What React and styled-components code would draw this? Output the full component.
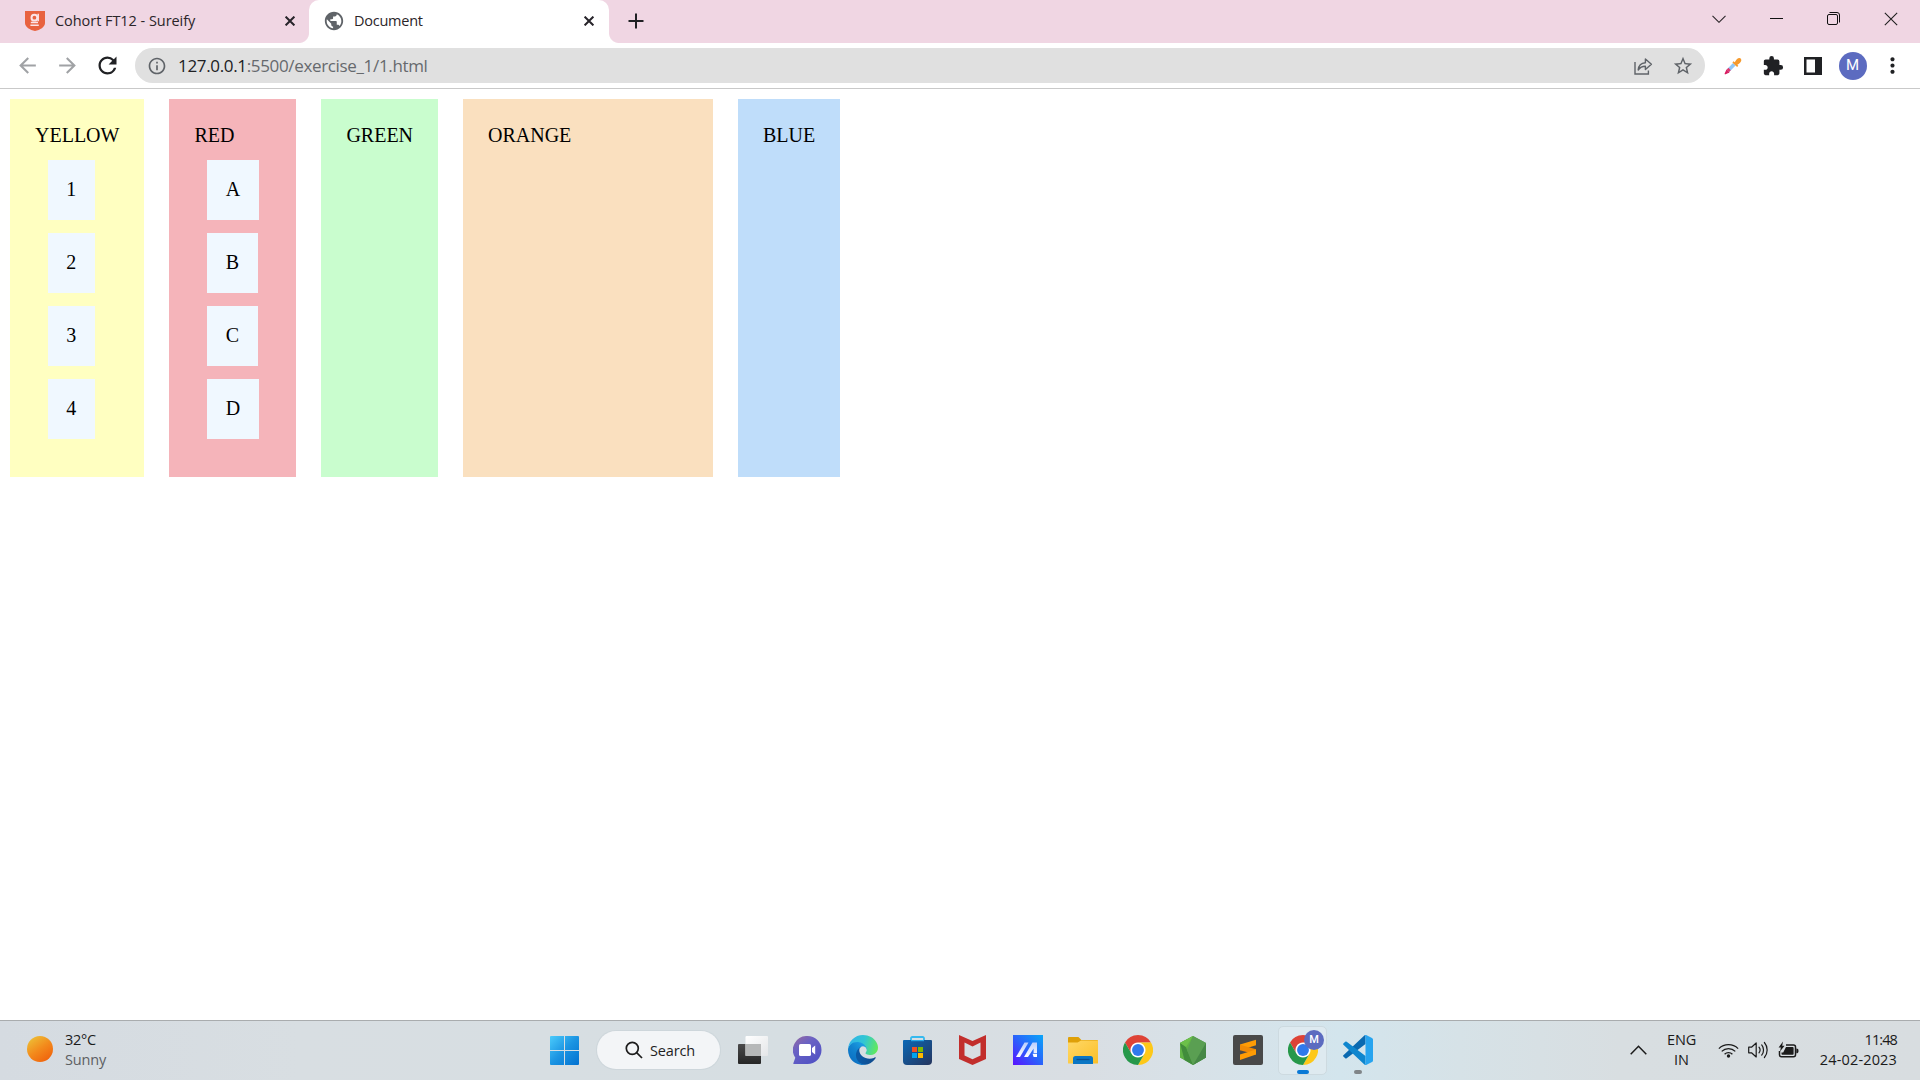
import React from "react";
import styled, { createGlobalStyle } from "styled-components";
import {
  MdPublic,
  MdRefresh,
  MdInfoOutline,
  MdArrowBack,
  MdArrowForward,
  MdStarBorder,
  MdExtension,
  MdMoreVert,
} from "react-icons/md";

const GlobalStyle = createGlobalStyle`
  *, *::before, *::after { box-sizing: border-box; }
  body { margin: 0; background: #fff; overflow: hidden; }
  svg { display: block; flex: none; }
`;

const UI_FONT = `"Open Sans", "Noto Sans", sans-serif`;

const Screen = styled.div`
  display: flex;
  flex-direction: column;
  width: 1920px;
  height: 1080px;
  font-family: ${UI_FONT};
  color: #1f1f1f;
`;

/* Tab strip */
const TabStrip = styled.header`
  display: flex;
  height: 43px;
  background: #f0d6e3;
`;

const Tab = styled.div`
  position: relative;
  display: flex;
  align-items: center;
  width: ${(p) => p.$width}px;
  height: 43px;
  padding: 0 ${(p) => p.$right}px 1px ${(p) => p.$left}px;
  background: ${(p) => (p.$active ? "#fff" : "transparent")};
  border-radius: 10px 10px 0 0;

  &::before,
  &::after {
    content: ${(p) => (p.$active ? '""' : "none")};
    position: absolute;
    bottom: 0;
    width: 10px;
    height: 10px;
  }
  &::before {
    left: -10px;
    background: radial-gradient(circle at 0 0, transparent 9.5px, #fff 10.5px);
  }
  &::after {
    right: -10px;
    background: radial-gradient(circle at 100% 0, transparent 9.5px, #fff 10.5px);
  }
`;

const TabTitle = styled.span`
  flex: 1;
  margin-left: ${(p) => p.$gap}px;
  padding-bottom: 1px;
  font-size: 14.5px;
  line-height: 20px;
  letter-spacing: ${(p) => p.$track}px;
  color: #2b2529;
  white-space: nowrap;
`;

const NewTab = styled.div`
  display: flex;
  align-items: center;
  padding: 0 0 1px 19px;
`;

const WindowControls = styled.div`
  display: flex;
  margin-left: auto;
`;

const WindowButton = styled.div`
  display: flex;
  justify-content: center;
  align-items: center;
  width: 57.3px;
  height: 37px;
`;

/* Toolbar */
const Toolbar = styled.nav`
  display: flex;
  align-items: center;
  height: 46px;
  padding: 0 7.5px 0 7px;
  border-bottom: 1px solid #c9c9c9;
  background: #fff;
`;

const ToolButton = styled.div`
  display: flex;
  justify-content: center;
  align-items: center;
  width: 40px;
  height: 36px;
  color: ${(p) => p.$color || "#202124"};
`;

const AddressBar = styled.div`
  flex: 1;
  display: flex;
  align-items: center;
  height: 35px;
  margin: 0 7.5px 0 8px;
  padding: 0 2px 0 12px;
  border-radius: 18px;
  background: #e0e0e0;
  color: #5f6368;
`;

const Url = styled.span`
  flex: 1;
  margin-left: 11px;
  font-size: 17px;
  line-height: 24px;
  letter-spacing: -0.34px;
  color: #66696d;
`;

const Host = styled.span`
  color: #202124;
`;

const Avatar = styled.div`
  display: flex;
  justify-content: center;
  align-items: center;
  width: ${(p) => p.$size}px;
  height: ${(p) => p.$size}px;
  border-radius: 50%;
  background: #5c6bc0;
  color: #fff;
  font-family: Roboto, sans-serif;
  font-weight: ${(p) => p.$weight || 400};
  font-size: ${(p) => p.$font}px;
  line-height: 1;
`;

/* Page */
const Page = styled.main`
  flex: 1;
  display: flex;
  align-items: flex-start;
  gap: 25px;
  padding: 10px;
  background: #fff;
  font-family: "Liberation Serif", "Times New Roman", serif;
  font-size: 20px;
  line-height: 23px;
  color: #000;
`;

const Column = styled.section`
  display: flex;
  flex-direction: column;
  align-items: flex-start;
  width: ${(p) => (p.$width ? `${p.$width}px` : "auto")};
  height: 378px;
  padding: 25px;
  background: ${(p) => p.$bg};
`;

const Item = styled.div`
  margin: 13px 12.5px 0;
  padding: 18px 18.75px 19px;
  background: aliceblue;
`;

/* Taskbar */
const Taskbar = styled.footer`
  display: flex;
  align-items: center;
  height: 60px;
  padding-bottom: 1px;
  border-top: 1px solid #a9acae;
  background: linear-gradient(
    90deg,
    #d5dbe1 0,
    #d8dee2 300px,
    #d6dee2 800px,
    #d9dee3 1080px,
    #d8e1e7 1180px,
    #d3e5ed 1340px,
    #d6e2e7 1460px,
    #d8dee1 1620px,
    #d8dde0 1920px
  );
`;

const Weather = styled.div`
  display: flex;
  align-items: center;
  gap: 12px;
  width: 537px;
  padding-left: 27px;
`;

const Sun = styled.div`
  width: 26px;
  height: 26px;
  margin-bottom: 2px;
  border-radius: 50%;
  background: linear-gradient(145deg, #edbd35 10%, #f38a1c 50%, #f0620c 90%);
`;

const Lines = styled.div`
  display: flex;
  flex-direction: column;
  align-items: ${(p) => p.$align || "flex-start"};
  padding-bottom: ${(p) => p.$lift || 0}px;
  font-size: 14.5px;
  line-height: 20px;
  white-space: nowrap;
`;

const Line = styled.span`
  color: ${(p) => p.$color || "#1b1b1b"};
  letter-spacing: ${(p) => p.$track || 0}px;
`;

const Slot = styled.div`
  display: flex;
  justify-content: center;
  align-items: center;
  width: 55px;
  height: 58px;
`;

const SearchPill = styled.div`
  display: flex;
  align-items: center;
  gap: 7px;
  width: 123px;
  height: 38px;
  margin: 0 5px;
  padding-left: 28px;
  border-radius: 19px;
  background: #f3f5f7;
  box-shadow: 0 0 0 1px rgba(190, 200, 206, 0.35);
  font-size: 14.5px;
  letter-spacing: -0.15px;
`;

const ActiveTile = styled.div`
  position: relative;
  display: flex;
  justify-content: center;
  align-items: center;
  width: 49px;
  height: 49px;
  border: 1px solid #cddae0;
  border-radius: 5px;
  background: #deeaf0;
`;

const RunningApp = styled.div`
  position: relative;
`;

const Badge = styled.div`
  position: absolute;
  top: 3px;
  right: 2px;
`;

const Indicator = styled.div`
  position: absolute;
  left: 50%;
  bottom: ${(p) => p.$bottom}px;
  width: ${(p) => p.$width}px;
  height: 4px;
  transform: translateX(-50%);
  border-radius: 2px;
  background: ${(p) => p.$color};
`;

const Tray = styled.div`
  display: flex;
  align-items: center;
  margin-left: auto;
  padding-right: 23px;
`;

const Language = styled.div`
  margin: 0 22px 0 20px;
`;

const StatusIcons = styled.div`
  display: flex;
  align-items: center;
  gap: 9px;
  margin-right: 21px;
`;

const Clock = styled.div`
  display: flex;
  justify-content: flex-end;
  width: 77px;
`;

const CloseGlyph = ({ size = 10, w = 2, color = "#27242a" }) => (
  <svg width={size} height={size} viewBox="0 0 10 10" stroke={color} strokeWidth={w}>
    <path d="M.6.6 9.4 9.4M9.4.6.6 9.4" />
  </svg>
);

const CourseIcon = () => (
  <svg width="20" height="20" viewBox="0 0 20 20">
    <path d="M0 0h20v12c0 4-5 7-10 8C5 19 0 16 0 12z" fill="#e8623f" />
    <g fill="none" stroke="#fbe3e6">
      <circle cx="9.400" cy="6.700" r="2.900" strokeWidth="2" />
      <path d="M13.200 2.800v7.400" strokeWidth="1.500" />
      <path d="M5.800 11.500h7.200M5.400 14.200h8.400" strokeWidth="1.600" />
    </g>
  </svg>
);

const ShareIcon = () => (
  <svg width="20" height="20" viewBox="0 0 20 20" fill="none" stroke="#5f6368" strokeWidth="1.400">
    <path d="M2 6v12h13.400v-3.600" />
    <path d="M5.200 14C5.600 9.400 8.300 6.900 12.400 6.700V3l6 5.300-6 5.300V10.200C9.200 10.200 6.900 11.400 5.200 14z" strokeLinejoin="round" />
  </svg>
);

const PickerIcon = () => (
  <svg width="18" height="18" viewBox="0 0 18 18">
    <path d="M1.200 16.800l1.600-3.600 2 2z" fill="#d81b60" stroke="#d81b60" strokeWidth="1.200" strokeLinejoin="round" />
    <path d="M2.800 12.400 9 6l2.600 2.600-6.400 6.300z" fill="#90c8f8" />
    <path d="M2.600 12.700 4.500 10.800 6.800 13.200 5 15.100z" fill="#e0366f" />
    <path d="M8.400 5.400 9.500 4.300l1.300 1C11.800 3 13.600.9 15.400.9c1.600.2 2 1.400 1.900 2.500-.3 1.800-2.200 3.200-4 4.300l1 1.100-1.200 1.300z" fill="#f59a2e" />
  </svg>
);

const SidePanelIcon = () => (
  <svg width="18" height="18" viewBox="0 0 18 18">
    <path d="M0 0h18v18H0z" fill="#202124" />
    <path d="M2.500 2.500h8.500v13H2.500z" fill="#fff" />
  </svg>
);

const WindowsIcon = () => (
  <svg width="29" height="29" viewBox="0 0 29 29">
    <defs>
      <linearGradient id="win" x1="0" y1="0" x2="1" y2="1">
        <stop offset="0" stopColor="#4bcbfb" />
        <stop offset=".5" stopColor="#1b94e2" />
        <stop offset="1" stopColor="#0271d0" />
      </linearGradient>
    </defs>
    <path d="M1 0h13v14H0V1a1 1 0 0 1 1-1zM15 0h13a1 1 0 0 1 1 1v13H15zM0 15h14v14H1a1 1 0 0 1-1-1zM15 15h14v13a1 1 0 0 1-1 1H15z" fill="url(#win)" />
  </svg>
);

const SearchIcon = () => (
  <svg width="18" height="18" viewBox="0 0 18 18" fill="none" stroke="#1c1c1c" strokeWidth="1.700">
    <circle cx="7.300" cy="7.300" r="6" />
    <path d="M11.600 11.600 17 17" />
  </svg>
);

const TaskViewIcon = () => (
  <svg width="30" height="28" viewBox="0 0 30 28">
    <defs>
      <linearGradient id="tvDark" x1="0" y1="0" x2="0" y2="1">
        <stop offset="0" stopColor="#4a4a4a" />
        <stop offset="1" stopColor="#262626" />
      </linearGradient>
      <linearGradient id="tvLight" x1="0" y1="0" x2="1" y2="1">
        <stop offset="0" stopColor="#fff" />
        <stop offset="1" stopColor="#e4e6e8" />
      </linearGradient>
    </defs>
    <rect x="0" y="8" width="23" height="20" rx="1" fill="url(#tvDark)" />
    <rect x="7.500" y="0" width="22.500" height="20" rx="1" fill="url(#tvLight)" />
    <rect x="7.500" y="8" width="15.500" height="12" fill="#b6b8b8" />
  </svg>
);

const ChatIcon = () => (
  <svg width="29" height="28" viewBox="0 0 29 28">
    <defs>
      <linearGradient id="chat" x1="0" y1="0" x2=".7" y2="1">
        <stop offset="0" stopColor="#9a6a9e" />
        <stop offset=".4" stopColor="#6a62c4" />
        <stop offset="1" stopColor="#5152c4" />
      </linearGradient>
    </defs>
    <path d="M14.500 0a14 14 0 0 1 0 28H.8c-.6 0-.7-.6-.4-1l1.900-5.200A14 14 0 0 1 14.500 0z" fill="url(#chat)" />
    <rect x="6" y="8" width="12" height="12" rx="1.600" fill="#fff" />
    <path d="M19 12l3.200-2.600v9.200L19 16z" fill="#fff" />
  </svg>
);

const EdgeIcon = () => (
  <svg width="30" height="30" viewBox="0 0 256 256">
    <defs>
      <linearGradient id="edgeA" x1=".25" y1=".5" x2="1" y2=".5">
        <stop offset="0" stopColor="#0c59a4" />
        <stop offset="1" stopColor="#114a8b" />
      </linearGradient>
      <linearGradient id="edgeB" x1=".8" y1=".2" x2=".2" y2="1">
        <stop offset="0" stopColor="#1b9de2" />
        <stop offset=".4" stopColor="#1283cf" />
        <stop offset="1" stopColor="#0a6cc0" />
      </linearGradient>
      <linearGradient id="edgeC" x1="0" y1=".4" x2="1" y2=".6">
        <stop offset="0" stopColor="#32b4e8" />
        <stop offset=".5" stopColor="#31c6d4" />
        <stop offset="1" stopColor="#62ea58" />
      </linearGradient>
    </defs>
    <path fill="url(#edgeA)" d="M231.070 190.540c-3.400 1.800-6.900 3.400-10.500 4.700a101.900 101.900 0 0 1-35.900 6.500c-47.300 0-88.500-32.500-88.500-74.300a31.500 31.500 0 0 1 16.400-27.300c-42.800 1.800-53.800 46.400-53.800 72.500 0 74 68.100 81.400 82.800 81.400 7.900 0 19.800-2.300 27-4.600l1.300-.4a128.300 128.300 0 0 0 66.600-52.800 4 4 0 0 0-5.400-5.700z" />
    <path fill="url(#edgeB)" d="M105.730 241.420a79.200 79.200 0 0 1-22.700-21.300 80.700 80.700 0 0 1 29.500-120c3.200-1.500 8.500-4.100 15.600-4a32.400 32.400 0 0 1 25.700 13 31.900 31.900 0 0 1 6.300 18.700c0-.2 24.500-79.600-80-79.600-43.900 0-80 41.700-80 78.200a130.200 130.200 0 0 0 12.100 56 128 128 0 0 0 156.400 67.100 75.500 75.500 0 0 1-62.800-8z" />
    <path fill="url(#edgeC)" d="M152.330 148.860c-.9 1-3.400 2.500-3.400 5.600 0 2.600 1.700 5.100 4.700 7.200 14.400 10 41.500 8.700 41.600 8.700a59.600 59.600 0 0 0 30.300-8.300 61.400 61.400 0 0 0 30.400-52.900c.3-22.400-8-37.300-11.300-43.900C223.500 23.900 177.700 0 128 0A128 128 0 0 0 0 126.200c.5-36.500 36.800-66 80-66 3.500 0 23.500.3 42 10a72.600 72.600 0 0 1 30.900 29.300c6.100 10.600 7.200 24.100 7.200 29.500 0 5.300-2.700 13.300-7.800 19.900z" />
  </svg>
);

const StoreIcon = () => (
  <svg width="29" height="30" viewBox="0 0 29 30">
    <defs>
      <linearGradient id="store" x1="0" y1="0" x2="1" y2="1">
        <stop offset="0" stopColor="#0a68b6" />
        <stop offset="1" stopColor="#25355e" />
      </linearGradient>
    </defs>
    <path d="M8 7V3.300A1.300 1.300 0 0 1 9.300 2h10.400A1.300 1.300 0 0 1 21 3.300V7" fill="none" stroke="#35b9ee" strokeWidth="1.800" />
    <path d="M1 5h27a1 1 0 0 1 1 1v20a4 4 0 0 1-4 4H4a4 4 0 0 1-4-4V6a1 1 0 0 1 1-1z" fill="url(#store)" />
    <path d="M8 5h13v1.200H8z" fill="#2ba6e4" />
    <path d="M9 12h5v5H9z" fill="#f25022" />
    <path d="M15 12h5v5h-5z" fill="#7fba00" />
    <path d="M9 18h5v5H9z" fill="#00a4ef" />
    <path d="M15 18h5v5h-5z" fill="#ffb900" />
  </svg>
);

const ShieldIcon = () => (
  <svg width="27" height="30" viewBox="0 0 27 30">
    <path fillRule="evenodd" d="M0 0l13.500 6L27 0v24l-13.500 6L0 24zM5.500 7.600v13l8 3.600 8-3.600v-13l-8 4z" fill="#c22e2c" />
  </svg>
);

const AsusIcon = () => (
  <svg width="30" height="30" viewBox="0 0 30 30">
    <defs>
      <linearGradient id="asus" x1="0" y1="1" x2="1" y2="0">
        <stop offset="0" stopColor="#5a12ff" />
        <stop offset=".5" stopColor="#2a63fb" />
        <stop offset="1" stopColor="#0aa6f8" />
      </linearGradient>
      <linearGradient id="asusMark" x1="0" y1="1" x2="0" y2="0">
        <stop offset="0" stopColor="#fff" />
        <stop offset="1" stopColor="#b9cdfd" />
      </linearGradient>
    </defs>
    <path d="M0 0h30v30H0z" fill="url(#asus)" />
    <path d="M3 22 11.500 7.500h4L7 22z" fill="url(#asusMark)" />
    <path d="M11 22 19.500 7.500H24V18h-3.400v-4.500L15 22z" fill="url(#asusMark)" />
    <path d="M19.600 18.800H24V22h-3.400z" fill="#fff" />
  </svg>
);

const FolderIcon = () => (
  <svg width="30" height="27" viewBox="0 0 30 27">
    <defs>
      <linearGradient id="folder" x1="0" y1="0" x2="1" y2="1">
        <stop offset="0" stopColor="#ffd867" />
        <stop offset="1" stopColor="#fbbf27" />
      </linearGradient>
    </defs>
    <path d="M1 0h8.500c1 0 1.500.4 2.200 1.200L13.300 3H29a1 1 0 0 1 1 1v8H0V1a1 1 0 0 1 1-1z" fill="#dfa008" />
    <path d="M0 5.500h9.600L13 3.500h17V26a.6.600 0 0 1-.6.600H.6A.6.600 0 0 1 0 26z" fill="url(#folder)" />
    <path d="M5 27v-5.500A2.500 2.500 0 0 1 7.500 19h15a2.500 2.500 0 0 1 2.500 2.500V27z" fill="#0b76c4" />
    <path d="M8.500 22.500h13" stroke="#0a4f8f" strokeWidth="1.300" />
  </svg>
);

const ChromeIcon = () => (
  <svg width="30" height="30" viewBox="0 0 48 48">
    <circle cx="24" cy="24" r="12.500" fill="#fff" />
    <path d="M24 12H44.781a23.994 23.994 0 0 0-41.564.003L13.608 30l.009-.002A11.985 11.985 0 0 1 24 12Z" fill="#de4336" />
    <path d="M34.391 30.003 24 48A23.994 23.994 0 0 0 44.780 12.003H24l-.003.009A11.985 11.985 0 0 1 34.391 30.003Z" fill="#fdc819" />
    <path d="M13.609 30.003 3.218 12.006A23.994 23.994 0 0 0 24.003 48L34.393 30.003l-.007-.007a11.985 11.985 0 0 1-20.778.007Z" fill="#26984a" />
    <circle cx="24" cy="24" r="9.500" fill="#3079ec" />
  </svg>
);

const NodeIcon = () => (
  <svg width="26" height="29" viewBox="0 0 26 29">
    <path d="M13 0l13 7v14.500L13 29 0 21.500V7z" fill="#4f9e45" />
    <path d="M13 0 0 7v14.500L5 24z" fill="#5fb246" />
    <path d="M0 7l4.500 17L13 29 5.500 10z" fill="#418c3c" />
    <path d="M13 0l13 7v14.500L13 29 7 14z" fill="#5a9f52" />
    <path d="M26 7v14.500L13 29z" fill="#468846" />
    <path d="M13 0 0 7l6 4z" fill="#6cc04a" />
  </svg>
);

const SublimeIcon = () => (
  <svg width="30" height="30" viewBox="0 0 30 30">
    <rect width="30" height="30" rx="2" fill="#494949" />
    <path d="M7 9.600 23 4.800v5.400L7 15.200z" fill="#ff9c05" />
    <path d="M7 9.800 23 14.300v5.300L7 15.200z" fill="#f08a06" />
    <path d="M7 19.600 23 14.500v5.100L7 25z" fill="#ff9c05" />
  </svg>
);

const CodeIcon = () => (
  <svg width="30" height="30" viewBox="0 0 30 30">
    <path d="M.4 20.200a1 1 0 0 0 0 1.400l1.800 1.600a1.200 1.200 0 0 0 1.500.1L22.500 9V0c-.5 0-1 .3-1.400.7z" fill="#0a69b0" />
    <path d="M.4 9.800a1 1 0 0 1 0-1.400l1.800-1.600a1.200 1.200 0 0 1 1.500-.1L22.500 21v9c-.5 0-1-.3-1.400-.7z" fill="#0f86ce" />
    <path d="M22.500 0a1.800 1.800 0 0 1 .6.100L29 2.900A1.800 1.800 0 0 1 30 4.500v21a1.800 1.800 0 0 1-1 1.600l-5.900 2.800a1.800 1.800 0 0 1-2-.4c.5.4 1.400.1 1.400-.7V1.200c0-.8-.9-1.100-1.400-.6z" fill="#27a4ef" />
  </svg>
);

const WifiIcon = () => (
  <svg width="21" height="15" viewBox="0 0 21 15" fill="none" stroke="#1b1b1b" strokeWidth="1.300">
    <path d="M.9 5.600a13.600 13.600 0 0 1 19.200 0" />
    <path d="M3.700 8.400a9.600 9.600 0 0 1 13.600 0" />
    <path d="M6.600 11.200a5.500 5.500 0 0 1 7.800 0" />
    <circle cx="10.500" cy="13" r="1.700" fill="#1b1b1b" stroke="none" />
  </svg>
);

const VolumeIcon = () => (
  <svg width="21" height="18" viewBox="0 0 21 18" fill="none" stroke="#1b1b1b" strokeWidth="1.200">
    <path d="M.7 6.200h2.800L8.200 2v14l-4.700-4.200H.7z" strokeLinejoin="round" />
    <path d="M11 6.200a4.500 4.500 0 0 1 0 5.600M13.700 3.900a8 8 0 0 1 0 10.200M16.400 1.500a11.600 11.600 0 0 1 0 15" strokeLinecap="round" />
  </svg>
);

const BatteryIcon = () => (
  <svg width="21" height="18" viewBox="0 0 21 18">
    <path d="M8 4h7.500a2 2 0 0 1 2 2v7.800a2 2 0 0 1-2 2h-12a2 2 0 0 1-2-2V10" fill="none" stroke="#1b1b1b" strokeWidth="1.500" />
    <path d="M18.300 7.500c1.500 0 2.200.8 2.200 2.400s-.7 2.400-2.200 2.400z" fill="#1b1b1b" />
    <path d="M8 6h6.600a1 1 0 0 1 1 1v6a.8.800 0 0 1-.8.800H4.300a.8.800 0 0 1-.8-.8v-1.500h1.700z" fill="#1b1b1b" />
    <path d="M5 .4.6 6.400h2.300L2 10.600l4.600-5.800H4.200z" fill="#1b1b1b" />
  </svg>
);

const COLUMNS = [
  { name: "YELLOW", bg: "#ffffc1", width: 134.4, items: ["1", "2", "3", "4"] },
  { name: "RED", bg: "#f5b4ba", width: 127, items: ["A", "B", "C", "D"] },
  { name: "GREEN", bg: "#c9fdce", width: 116.6, items: [] },
  { name: "ORANGE", bg: "#fae0bf", width: 250, items: [] },
  { name: "BLUE", bg: "#bfddfa", width: 102, items: [] },
];

const PINNED = [
  TaskViewIcon,
  ChatIcon,
  EdgeIcon,
  StoreIcon,
  ShieldIcon,
  AsusIcon,
  FolderIcon,
  ChromeIcon,
  NodeIcon,
  SublimeIcon,
];

export default function App() {
  return (
    <Screen>
      <GlobalStyle />
      <TabStrip>
        <Tab $width={309} $left={25} $right={14}>
          <CourseIcon />
          <TabTitle $gap={10} $track={-0.05}>Cohort FT12 - Sureify</TabTitle>
          <CloseGlyph />
        </Tab>
        <Tab $active $width={300} $left={14} $right={15}>
          <MdPublic size={22} color="#5f6368" />
          <TabTitle $gap={9} $track={-0.25}>Document</TabTitle>
          <CloseGlyph />
        </Tab>
        <NewTab>
          <svg width="16" height="16" viewBox="0 0 16 16" stroke="#202124" strokeWidth="2">
            <path d="M8 .5v15M.5 8h15" />
          </svg>
        </NewTab>
        <WindowControls>
          <WindowButton>
            <svg width="14" height="8" viewBox="0 0 14 8" fill="none" stroke="#2a2528" strokeWidth="1.100">
              <path d="M.5.8 7 7.300 13.500.8" />
            </svg>
          </WindowButton>
          <WindowButton>
            <svg width="13" height="1" viewBox="0 0 13 1">
              <path d="M0 0h13v1H0z" fill="#111" />
            </svg>
          </WindowButton>
          <WindowButton>
            <svg width="14" height="13" viewBox="0 0 14 13" fill="none" stroke="#111" strokeWidth="1">
              <rect x=".5" y="2.500" width="10" height="10" rx="1.500" />
              <path d="M2.500.5H10A2.500 2.500 0 0 1 12.500 3v7.500" />
            </svg>
          </WindowButton>
          <WindowButton>
            <CloseGlyph size={14} w={0.8} color="#222" />
          </WindowButton>
        </WindowControls>
      </TabStrip>

      <Toolbar>
        <ToolButton $color="#a0a2a5"><MdArrowBack size={25} /></ToolButton>
        <ToolButton $color="#a0a2a5"><MdArrowForward size={25} /></ToolButton>
        <ToolButton><MdRefresh size={27} /></ToolButton>
        <AddressBar>
          <MdInfoOutline size={20} />
          <Url>
            <Host>127.0.0.1</Host>:5500/exercise_1/1.html
          </Url>
          <ToolButton><ShareIcon /></ToolButton>
          <ToolButton $color="#5f6368"><MdStarBorder size={22} /></ToolButton>
        </AddressBar>
        <ToolButton><PickerIcon /></ToolButton>
        <ToolButton><MdExtension size={22} /></ToolButton>
        <ToolButton><SidePanelIcon /></ToolButton>
        <ToolButton><Avatar $size={28} $font={15}>M</Avatar></ToolButton>
        <ToolButton><MdMoreVert size={25} /></ToolButton>
      </Toolbar>

      <Page>
        {COLUMNS.map((c) => (
          <Column key={c.name} $bg={c.bg} $width={c.width}>
            {c.name}
            {c.items.map((i) => (
              <Item key={i}>{i}</Item>
            ))}
          </Column>
        ))}
      </Page>

      <Taskbar>
        <Weather>
          <Sun />
          <Lines $lift={1}>
            <Line $track={-0.3}>32°C</Line>
            <Line $track={-0.15} $color="#5d6063">Sunny</Line>
          </Lines>
        </Weather>
        <Slot><WindowsIcon /></Slot>
        <SearchPill>
          <SearchIcon />
          Search
        </SearchPill>
        {PINNED.map((Icon, i) => (
          <Slot key={i}><Icon /></Slot>
        ))}
        <Slot>
          <ActiveTile>
            <ChromeIcon />
            <Badge><Avatar $size={20} $font={11} $weight={500}>M</Avatar></Badge>
            <Indicator $width={12} $bottom={0} $color="#0a79d6" />
          </ActiveTile>
        </Slot>
        <Slot>
          <RunningApp>
            <CodeIcon />
            <Indicator $width={8} $bottom={-9} $color="#808588" />
          </RunningApp>
        </Slot>
        <Tray>
          <svg width="17" height="10" viewBox="0 0 17 10" fill="none" stroke="#1b1b1b" strokeWidth="1.500">
            <path d="M.7 9.200 8.500 1.200l7.800 8" />
          </svg>
          <Language>
            <Lines $align="center">
              <Line $track={-0.2}>ENG</Line>
              <Line>IN</Line>
            </Lines>
          </Language>
          <StatusIcons>
            <WifiIcon />
            <VolumeIcon />
            <BatteryIcon />
          </StatusIcons>
          <Clock>
            <Lines $align="flex-end" $lift={1}>
              <Line $track={-0.9}>11:48</Line>
              <Line $track={0.15}>24-02-2023</Line>
            </Lines>
          </Clock>
        </Tray>
      </Taskbar>
    </Screen>
  );
}
